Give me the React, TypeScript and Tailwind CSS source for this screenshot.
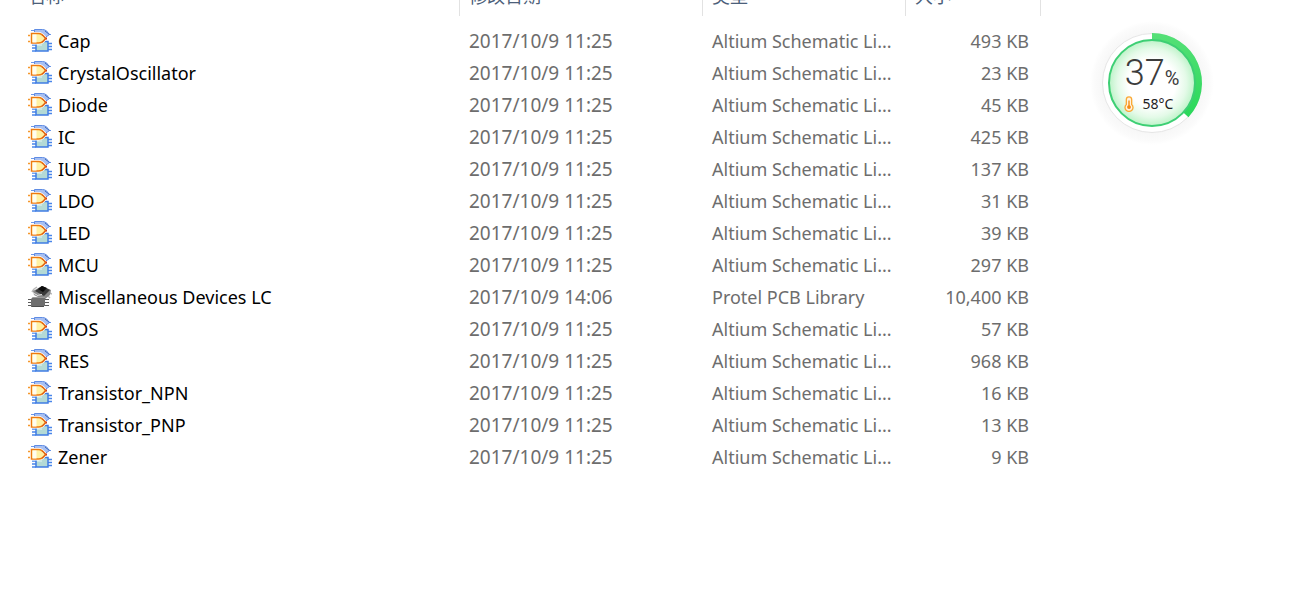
type FileKind = "sch" | "pcb";

type FileEntry = {
  name: string;
  modified: string;
  kind: FileKind;
  size: string;
};

const TYPE_LABEL: Record<FileKind, string> = {
  sch: "Altium Schematic Li...",
  pcb: "Protel PCB Library",
};

const files: FileEntry[] = [
  { name: "Cap", modified: "2017/10/9 11:25", kind: "sch", size: "493 KB" },
  { name: "CrystalOscillator", modified: "2017/10/9 11:25", kind: "sch", size: "23 KB" },
  { name: "Diode", modified: "2017/10/9 11:25", kind: "sch", size: "45 KB" },
  { name: "IC", modified: "2017/10/9 11:25", kind: "sch", size: "425 KB" },
  { name: "IUD", modified: "2017/10/9 11:25", kind: "sch", size: "137 KB" },
  { name: "LDO", modified: "2017/10/9 11:25", kind: "sch", size: "31 KB" },
  { name: "LED", modified: "2017/10/9 11:25", kind: "sch", size: "39 KB" },
  { name: "MCU", modified: "2017/10/9 11:25", kind: "sch", size: "297 KB" },
  { name: "Miscellaneous Devices LC", modified: "2017/10/9 14:06", kind: "pcb", size: "10,400 KB" },
  { name: "MOS", modified: "2017/10/9 11:25", kind: "sch", size: "57 KB" },
  { name: "RES", modified: "2017/10/9 11:25", kind: "sch", size: "968 KB" },
  { name: "Transistor_NPN", modified: "2017/10/9 11:25", kind: "sch", size: "16 KB" },
  { name: "Transistor_PNP", modified: "2017/10/9 11:25", kind: "sch", size: "13 KB" },
  { name: "Zener", modified: "2017/10/9 11:25", kind: "sch", size: "9 KB" },
];

function SchematicIcon() {
  return (
    <svg viewBox="0 0 24 24" className="size-6 shrink-0" aria-hidden="true">
      {/* back gate */}
      <path d="M3 1.500h3M3 3.500h3M19 5.500h4" stroke="#6c98ea" />
      <path d="M6.500 0.500h8c3 0 5 2 7 5c-1.500 1-2.500 2-4 2.500h-11z" fill="#a8c0f2" stroke="#5f8ce4" />
      <path d="M17 2l4.500 3.500" stroke="#3f68b8" />
      {/* chip */}
      <path
        d="M4 16h4M4 19h4M4 22h4M20 14.500h4M20 17.500h4M20 20.500h4"
        stroke="#4a86ea"
        strokeWidth="1.500"
      />
      <path d="M8 12.500h12v9.500h-12z" fill="#b4dad6" stroke="#3f7ce4" strokeWidth="1.500" />
      <path d="M9 15h5v2h-5z" fill="#cde8e4" />
      {/* front gate */}
      <path d="M0 6.500h3M0 12.500h3" stroke="#f5982c" strokeWidth="1.500" />
      <path
        d="M3.500 4.500h7c3 0 5 2 7 5c-2 3-4 4.500-7 4.500h-7z"
        fill="#ffffff"
        stroke="#ffffff"
        strokeWidth="3"
      />
      <path d="M17 9.500h2" stroke="#c92a1c" strokeWidth="2" />
      <path
        d="M3.500 4.500h7c3 0 5 2 7 5c-2 3-4 4.500-7 4.500h-7z"
        fill="#fff1a4"
        stroke="#ee7a10"
        strokeWidth="1.500"
      />
      <path d="M4.500 5.500h4v8h-4z" fill="#fffdf0" />
      <path d="M14 6c1.500 1 2.500 2 3.500 3.500c-1 1.500-2 2.500-3.500 3.500" fill="none" stroke="#d9591a" />
    </svg>
  );
}

function PcbIcon() {
  return (
    <svg viewBox="0 0 24 24" className="size-6 shrink-0" aria-hidden="true">
      {/* rotated package behind */}
      <path d="M4 7l2-3M6 4l3-2M20 11l2 2M22 8l2 1" stroke="#b9b9b9" strokeWidth="1.500" />
      <path d="M5 6l9-5l9 4l-1 5l-6 5l-10-5z" fill="#8a8a8a" />
      <path d="M7 6l7-5l8 4l-6 6z" fill="#3a3a3a" />
      <path d="M10 4l4-3l5 2l-4 4z" fill="#0c0c0c" />
      <path d="M5 8l4 2M9 10.500l5-1" stroke="#e4e4e4" />
      {/* front package */}
      <path d="M0 14.500h4M0 17.500h4M0 20.500h4M17 14.500h4M17 17.500h4M17 20.500h4" stroke="#5a5a5a" />
      <path d="M5 12h12v9h-1l-1 1h-12v-8z" fill="#6f6f6f" />
      <path d="M5 12.500h12" stroke="#9c9c9c" />
      <path d="M4 21.500h12" stroke="#505050" />
    </svg>
  );
}

function Gauge() {
  return (
    <aside
      aria-label="System monitor"
      className="absolute top-[21px] left-[1090px] size-[124px] font-['Noto_Sans',sans-serif]"
    >
      <svg viewBox="0 0 124 124" className="size-full" aria-hidden="true">
        <defs>
          <radialGradient id="halo">
            <stop offset="80%" stopColor="#f7f7f7" />
            <stop offset="93%" stopColor="#fbfbfb" />
            <stop offset="100%" stopColor="#ffffff" />
          </radialGradient>
          <radialGradient id="dial">
            <stop offset="55%" stopColor="#ffffff" />
            <stop offset="80%" stopColor="#e4fae8" />
            <stop offset="100%" stopColor="#bdf3c8" />
          </radialGradient>
          <linearGradient id="load" x1="0" y1="0" x2="0" y2="1">
            <stop offset="0%" stopColor="#55e077" />
            <stop offset="100%" stopColor="#2ad85a" />
          </linearGradient>
        </defs>
        <circle cx="62" cy="62" r="62" fill="url(#halo)" />
        <circle cx="62" cy="62" r="49.500" fill="#ffffff" stroke="#e6e6e6" />
        <path d="M62 12a50 50 0 0 1 36.450 84.230l-5.100-4.790a43 43 0 0 0-31.350-72.440z" fill="url(#load)" />
        <circle cx="62" cy="62" r="43" fill="url(#dial)" stroke="#3dcf74" strokeWidth="2" />
      </svg>
      <div className="absolute inset-0 flex flex-col items-center pt-[34px]">
        <p className="flex items-baseline text-[#3c3c3c]">
          <span className="font-['Roboto',sans-serif] text-4xl leading-9 font-light">37</span>
          <span className="font-['Roboto',sans-serif] text-xl leading-9">%</span>
        </p>
        <p className="flex items-center gap-2 pr-2 text-sm leading-4 text-[#222222]">
          <svg viewBox="0 0 12 18" className="h-4 w-3" aria-hidden="true">
            <path
              d="M3 4a3 3 0 0 1 6 0v5.500a4.500 4.500 0 1 1-6 0z"
              fill="#fff3df"
              stroke="#fba834"
              strokeWidth="1.500"
            />
            <path d="M6 5v7" stroke="#f58a12" strokeWidth="1.500" />
            <circle cx="6" cy="12.500" r="2.200" fill="#f58a12" />
          </svg>
          58°C
        </p>
      </div>
    </aside>
  );
}

// the header is scrolled half out of view, so its label hangs off the top edge
function HeaderCell({ label, className }: { label: string; className: string }) {
  return (
    <th scope="col" className="p-0 align-top font-normal">
      <div
        className={`flex h-4 flex-col justify-end overflow-hidden border-r border-[#e2e2e2] pb-2 text-left text-[#4c607a] ${className}`}
      >
        <span className="leading-6">{label}</span>
      </div>
    </th>
  );
}

export default function App() {
  return (
    <main className="relative min-h-screen overflow-hidden bg-white font-['Noto_Sans','Noto_Sans_CJK_SC',sans-serif] text-lg text-[#6d6d6d]">
      <table className="w-full table-fixed border-collapse">
        <colgroup>
          <col className="w-[460px]" />
          <col className="w-[243px]" />
          <col className="w-[203px]" />
          <col className="w-[135px]" />
          <col />
        </colgroup>
        <thead>
          <tr className="h-[25px]">
            <HeaderCell label="名称" className="pl-7" />
            <HeaderCell label="修改日期" className="pl-[9px]" />
            <HeaderCell label="类型" className="pl-[9px]" />
            <HeaderCell label="大小" className="pl-[9px]" />
            <td />
          </tr>
        </thead>
        <tbody>
          {files.map((file) => (
            <tr key={file.name} className="h-8 leading-8 whitespace-nowrap">
              <td className="p-0 pl-7 text-black">
                <div className="flex items-center gap-[6px]">
                  {file.kind === "pcb" ? <PcbIcon /> : <SchematicIcon />}
                  {file.name}
                </div>
              </td>
              <td className="p-0 pl-[9px] text-[19px] leading-8">{file.modified}</td>
              <td className="p-0 pl-[9px]">{TYPE_LABEL[file.kind]}</td>
              <td className="p-0 pr-3 text-right">{file.size}</td>
              <td />
            </tr>
          ))}
        </tbody>
      </table>
      <Gauge />
    </main>
  );
}
